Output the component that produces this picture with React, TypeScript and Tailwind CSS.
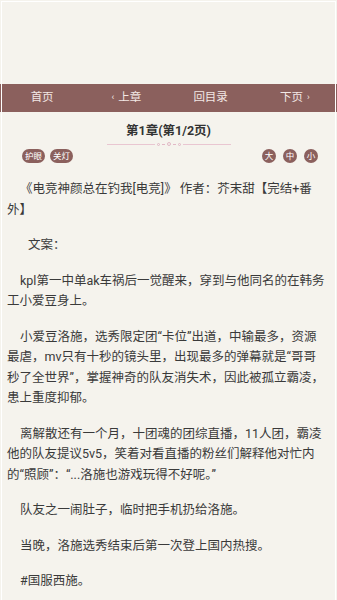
import React from 'react';

const font = 'font-[Roboto,"Noto_Sans_CJK_SC",sans-serif]';

const paragraphs = [
  '《电竞神颜总在钓我[电竞]》 作者：芥末甜【完结+番外】',
  '文案：',
  'kpl第一中单ak车祸后一觉醒来，穿到与他同名的在韩务工小爱豆身上。',
  '小爱豆洛施，选秀限定团“卡位”出道，中输最多，资源最虐，mv只有十秒的镜头里，出现最多的弹幕就是“哥哥秒了全世界”，掌握神奇的队友消失术，因此被孤立霸凌，患上重度抑郁。',
  '离解散还有一个月，十团魂的团综直播，11人团，霸凌他的队友提议5v5，笑着对看直播的粉丝们解释他对忙内的“照顾”：“...洛施也游戏玩得不好呢。”',
  '队友之一闹肚子，临时把手机扔给洛施。',
  '当晚，洛施选秀结束后第一次登上国内热搜。',
  '#国服西施。',
];

function NavBar() {
  return (
    <div className="grid h-[28px] grid-cols-4 items-center bg-[#8b605d] text-[11.5px] text-[#f3e8e5]">
      <div className="text-center">首页</div>
      <div className="flex items-center justify-center gap-1">
        <span className="text-[9px]">‹</span>
        <span>上章</span>
      </div>
      <div className="text-center">回目录</div>
      <div className="flex items-center justify-center gap-1">
        <span>下页</span>
        <span className="text-[9px]">›</span>
      </div>
    </div>
  );
}

function Divider() {
  return (
    <div className="mx-auto flex w-[124px] items-center">
      <div className="h-px flex-1 bg-[#e9c6d1]" />
      <div className="mx-[2px] flex items-center gap-[2px]">
        <span className="h-[3px] w-[3px] rounded-full border border-[#e2b8c6]" />
        <span className="h-px w-[3px] bg-[#e2b8c6]" />
        <span className="h-[4px] w-[4px] rounded-full border border-[#e2b8c6]" />
        <span className="h-px w-[3px] bg-[#e2b8c6]" />
        <span className="h-[3px] w-[3px] rounded-full border border-[#e2b8c6]" />
      </div>
      <div className="h-px flex-1 bg-[#e9c6d1]" />
    </div>
  );
}

function Toolbar() {
  const pill = 'flex h-[14px] items-center justify-center rounded-full bg-[#8b605d] px-[3px] text-[8.5px] leading-none text-white';
  const dot = 'flex h-[14px] w-[14px] items-center justify-center rounded-full bg-[#8b605d] text-[8.5px] leading-none text-white';
  return (
    <div className="mt-[3px] flex items-center justify-between pl-[22px] pr-[19px]">
      <div className="flex gap-[5px]">
        <span className={pill}>护眼</span>
        <span className={pill}>关灯</span>
      </div>
      <div className="flex gap-[7px]">
        <span className={dot}>大</span>
        <span className={dot}>中</span>
        <span className={dot}>小</span>
      </div>
    </div>
  );
}

export default function App() {
  return (
    <div className={`relative min-h-[600px] w-full overflow-hidden bg-[#f5f3ed] ${font}`}>
      <div className="h-[84px]" />
      <NavBar />
      <div className="pt-[10px] text-center text-[12.5px] font-bold leading-[18px] text-[#333]">
        第1章(第1/2页)
      </div>
      <div className="mt-[2px]">
        <Divider />
      </div>
      <Toolbar />
      <div className="mt-[16px] space-y-[15px] pl-[7px] pr-[11px] text-[12.5px] leading-[20.5px] text-[#3a3a3a]">
        {paragraphs.map((p, i) => (
          <p key={i} className={i === 1 ? 'indent-[21px]' : 'indent-[13px]'}>
            {p}
          </p>
        ))}
      </div>
      <div className="pointer-events-none absolute inset-x-[1px] top-[1px] bottom-0 border-x border-t border-white" />
    </div>
  );
}
